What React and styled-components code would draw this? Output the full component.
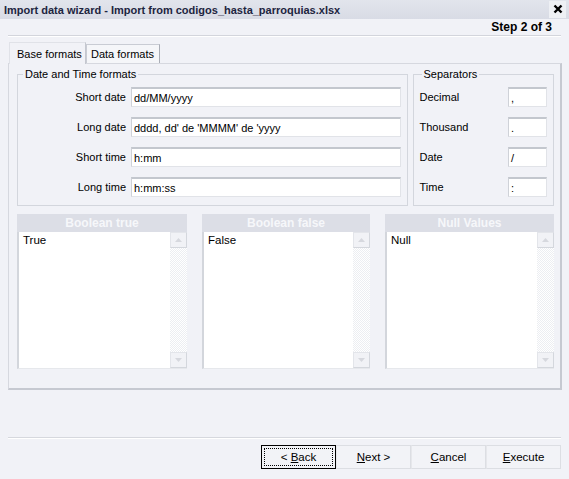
import React from 'react';
import styled, { createGlobalStyle } from 'styled-components';

const Global = createGlobalStyle`
  html, body { margin: 0; padding: 0; background: #f1f2f7; }
  body { font-family: "Liberation Sans", Arial, sans-serif; font-size: 11px; color: #000; }
  #root { width: 569px; height: 479px; overflow: hidden; }
  * { box-sizing: border-box; }
`;

const Window = styled.div`
  width: 569px;
  height: 479px;
  display: flex;
  flex-direction: column;
  background: #f1f2f7;
`;

const TitleBar = styled.div`
  height: 19px;
  display: flex;
  align-items: center;
  justify-content: space-between;
  background: linear-gradient(#e2e5ec, #d8dbe5);
  padding: 0 3px 0 4px;
`;

const Title = styled.span`
  font-weight: bold;
  font-size: 11px;
  color: #1d2540;
`;

const CloseBtn = styled.div`
  width: 17px;
  height: 17px;
  margin-top: -1px;
  display: flex;
  align-items: center;
  justify-content: center;
  background: #eef0f4;
`;

const StepRow = styled.div`
  height: 16px;
  display: flex;
  align-items: center;
  justify-content: flex-end;
  padding-right: 17px;
  font-weight: bold;
  font-size: 12px;
`;

const Divider = styled.div`
  height: 2px;
  margin: 0 8px;
  border-top: 1px solid #d3d5dc;
  border-bottom: 1px solid #ffffff;
`;

const Body = styled.div`
  padding: 5px 7px 0 8px;
  display: flex;
  flex-direction: column;
`;

const TabStrip = styled.div`
  display: flex;
  align-items: flex-end;
  height: 21px;
  padding-left: 1px;
`;

const Tab = styled.div`
  height: ${p => (p.$active ? '22px' : '19px')};
  width: ${p => p.$w}px;
  display: flex;
  align-items: center;
  padding-left: ${p => (p.$active ? '7px' : '4px')};
  background: ${p => (p.$active ? '#f1f2f7' : '#f5f6f9')};
  border: 1px solid ${p => (p.$active ? '#e0e2e8' : '#c9ccd4')};
  border-right-color: ${p => (p.$active ? '#c4c7cf' : '#a9adb6')};
  border-bottom: none;
  margin-bottom: ${p => (p.$active ? '-1px' : '0')};
  position: relative;
  z-index: ${p => (p.$active ? 1 : 0)};
  white-space: nowrap;
`;

const Panel = styled.div`
  height: 327px;
  border: 1px solid #d6d8df;
  border-right: 2px solid #c6c9d1;
  border-bottom: 2px solid #c6c9d1;
  padding: 4px 6px 0 8px;
  display: flex;
  flex-direction: column;
  gap: 8px;
`;

const GroupRow = styled.div`
  display: flex;
  gap: 5px;
`;

const Group = styled.fieldset`
  margin: 0;
  height: 138px;
  width: ${p => p.$w}px;
  border: 1px solid #d3d6dd;
  padding: ${p => p.$pad};
  min-width: 0;
  display: grid;
  grid-template-columns: ${p => p.$cols};
  column-gap: 5px;
  row-gap: 10px;
  align-content: start;
`;

const Legend = styled.legend`
  padding: 0 2px;
  margin-left: ${p => p.$ml}px;
  line-height: 13px;
  font-size: 11px;
`;

const FieldLabel = styled.label`
  display: flex;
  align-items: center;
  justify-content: ${p => (p.$right ? 'flex-end' : 'flex-start')};
  height: 20px;
  white-space: nowrap;
`;

const TextBox = styled.div`
  height: 20px;
  background: #fff;
  border: 1px solid #e1e3e8;
  border-top: 2px solid #c3c7ce;
  border-left-color: #cfd2d8;
  display: flex;
  align-items: center;
  padding-left: 2px;
  white-space: nowrap;
`;

const ListRow = styled.div`
  display: grid;
  grid-template-columns: 170px 168px 169px;
  column-gap: 15px;
`;

const ListBox = styled.div`
  display: flex;
  flex-direction: column;
  height: 155px;
`;

const ListHeader = styled.div`
  height: 18px;
  background: #dcdee6;
  color: #f6f7fa;
  font-weight: bold;
  font-size: 12px;
  display: flex;
  align-items: center;
  justify-content: center;
`;

const ListBody = styled.div`
  flex: 1;
  display: flex;
  background: #fff;
  border-left: 2px solid #d3d6dc;
  border-bottom: 1px solid #e6e8ec;
`;

const ListText = styled.div`
  flex: 1;
  padding: 2px 0 0 4px;
  font-size: 11.5px;
`;

const ScrollBar = styled.div`
  width: 17px;
  display: flex;
  flex-direction: column;
  justify-content: space-between;
  background-color: #fbfbfc;
  background-image: repeating-conic-gradient(#eceef2 0 25%, #ffffff 0 50%);
  background-size: 2px 2px;
`;

const ScrollBtn = styled.div`
  height: 16px;
  background: #f1f2f6;
  border: 1px solid #e3e5ea;
  border-right-color: #d4d7dd;
  border-bottom-color: #d4d7dd;
  display: flex;
  align-items: center;
  justify-content: center;
`;

const Spacer = styled.div`
  height: 47px;
`;

const BottomDivider = styled.div`
  height: 2px;
  margin: 0 8px;
  border-top: 1px solid #d6d8de;
  border-bottom: 1px solid #ffffff;
`;

const ButtonRow = styled.div`
  display: flex;
  justify-content: flex-end;
  padding: 6px 8px 0 0;
`;

const Button = styled.button`
  width: 75px;
  height: 24px;
  margin: 0;
  font-family: "Liberation Sans", Arial, sans-serif;
  font-size: 11.5px;
  color: #000;
  background: #f2f3f7;
  border: 1px solid ${p => (p.$default ? '#000' : '#dcdee3')};
  border-left-color: ${p => (p.$default ? '#000' : '#e6e7eb')};
  padding: 2px;
  display: flex;
  align-items: stretch;
  justify-content: stretch;
  cursor: default;
`;

const ButtonInner = styled.span`
  flex: 1;
  display: flex;
  align-items: center;
  justify-content: center;
  border: 1px dotted ${p => (p.$focus ? '#000' : 'transparent')};
  white-space: pre;
`;

const Arrow = ({ up }) => (
  <svg width="7" height="4" viewBox="0 0 7 4">
    <path d={up ? 'M0 4 L3.5 0 L7 4 Z' : 'M0 0 L3.5 4 L7 0 Z'} fill="#d6d8de" />
  </svg>
);

const List = ({ title, value }) => (
  <ListBox>
    <ListHeader>{title}</ListHeader>
    <ListBody>
      <ListText>{value}</ListText>
      <ScrollBar>
        <ScrollBtn><Arrow up /></ScrollBtn>
        <ScrollBtn><Arrow /></ScrollBtn>
      </ScrollBar>
    </ListBody>
  </ListBox>
);

const dateRows = [
  ['Short date', 'dd/MM/yyyy'],
  ['Long date', "dddd, dd' de 'MMMM' de 'yyyy"],
  ['Short time', 'h:mm'],
  ['Long time', 'h:mm:ss'],
];

const sepRows = [
  ['Decimal', ','],
  ['Thousand', '.'],
  ['Date', '/'],
  ['Time', ':'],
];

const buttons = [
  { pre: '< ', key: 'B', post: 'ack', def: true },
  { pre: '', key: 'N', post: 'ext >' },
  { pre: '', key: 'C', post: 'ancel' },
  { pre: '', key: 'E', post: 'xecute' },
];

export default function App() {
  return (
    <Window>
      <Global />
      <TitleBar>
        <Title>Import data wizard - Import from codigos_hasta_parroquias.xlsx</Title>
        <CloseBtn>
          <svg width="10" height="10" viewBox="0 0 10 10">
            <path d="M1.5 1.5 L8.5 8.5 M8.5 1.5 L1.5 8.5" stroke="#000" strokeWidth="2.4" />
          </svg>
        </CloseBtn>
      </TitleBar>
      <StepRow>Step 2 of 3</StepRow>
      <Divider />
      <Body>
        <TabStrip>
          <Tab $active $w={77}>Base formats</Tab>
          <Tab $w={74}>Data formats</Tab>
        </TabStrip>
        <Panel>
          <GroupRow>
            <Group $w={392} $pad="6px 7px 7px 0" $cols="108px 270px">
              <Legend $ml={5}>Date and Time formats</Legend>
              {dateRows.map(([l, v]) => (
                <React.Fragment key={l}>
                  <FieldLabel $right>{l}</FieldLabel>
                  <TextBox>{v}</TextBox>
                </React.Fragment>
              ))}
            </Group>
            <Group $w={142} $pad="6px 6px 7px 6px" $cols="1fr 39px">
              <Legend $ml={2}>Separators</Legend>
              {sepRows.map(([l, v]) => (
                <React.Fragment key={l}>
                  <FieldLabel>{l}</FieldLabel>
                  <TextBox>{v}</TextBox>
                </React.Fragment>
              ))}
            </Group>
          </GroupRow>
          <ListRow>
            <List title="Boolean true" value="True" />
            <List title="Boolean false" value="False" />
            <List title="Null Values" value="Null" />
          </ListRow>
        </Panel>
      </Body>
      <Spacer />
      <BottomDivider />
      <ButtonRow>
        {buttons.map(b => (
          <Button key={b.key} $default={b.def}>
            <ButtonInner $focus={b.def}>
              <span>{b.pre}<u>{b.key}</u>{b.post}</span>
            </ButtonInner>
          </Button>
        ))}
      </ButtonRow>
    </Window>
  );
}
